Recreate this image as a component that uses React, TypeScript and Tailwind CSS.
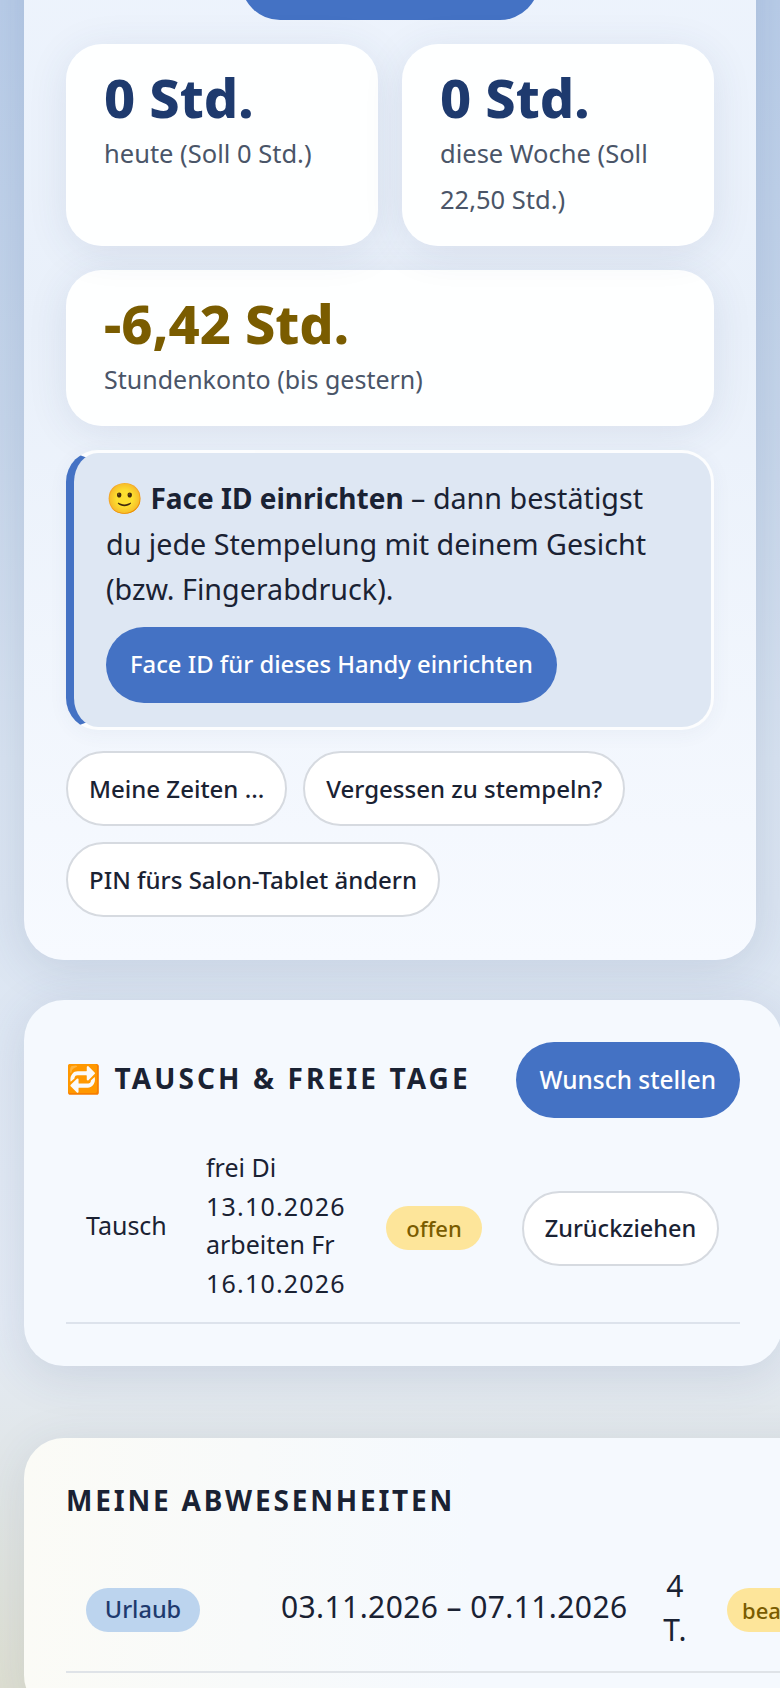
const pill =
  'inline-flex h-[75px] shrink-0 items-center rounded-full border-2 border-[#d6dae0] bg-white px-[21px] text-[24px] font-medium whitespace-nowrap text-[#1a2233]';
const primary =
  'inline-flex items-center rounded-full bg-[#4472c4] whitespace-nowrap text-white font-medium';
const badge = 'inline-flex h-[44px] shrink-0 items-center justify-center rounded-full font-medium';
const title = 'text-[28px] font-bold uppercase whitespace-nowrap text-[#1a2233]';
const statCard =
  'rounded-[36px] bg-white/95 px-[38px] shadow-[0_6px_40px_rgba(50,70,110,0.1)]';

function Stat({ value, label, amber }: { value: string; label: string; amber?: boolean }) {
  return (
    <>
      <div className={`text-[54px] leading-[64px] font-extrabold ${amber ? 'text-[#7a5c00]' : 'text-[#1e3a6e]'}`}>
        {value}
      </div>
      <div className={`mt-[1px] leading-[46px] text-[#4a5568] ${amber ? 'text-[25px]' : 'text-[25.5px]'}`}>{label}</div>
    </>
  );
}

export default function App() {
  return (
    <div className="h-[1688px] w-[780px] overflow-hidden bg-[linear-gradient(180deg,#b9cde9_0%,#c6d6eb_25%,#d8e3f1_45%,#e4ebf5_78%,#e0e5e6_88%,#dedfd2_100%)] font-['Noto_Sans',sans-serif]">
      <div className="-mt-[100px] ml-6 w-[732px]">
        <section className="rounded-[40px] bg-[linear-gradient(180deg,#eef4fd_0%,#e9f0fa_40%,#f7faff_100%)] p-[42px] pb-[43px] shadow-[0_8px_48px_rgba(50,70,110,0.14)]">
          <div className="flex justify-center">
            <div className="h-[78px] w-[298px] rounded-full bg-[#4472c4]" />
          </div>

          <div className="mt-6 grid grid-cols-2 gap-6">
            <div className={`${statCard} h-[202px] pt-[21px]`}>
              <Stat value="0 Std." label="heute (Soll 0 Std.)" />
            </div>
            <div className={`${statCard} h-[202px] pt-[21px]`}>
              <Stat value="0 Std." label="diese Woche (Soll 22,50 Std.)" />
            </div>
          </div>

          <div className={`${statCard} mt-6 h-[156px] pt-[21px]`}>
            <Stat value="-6,42 Std." label="Stundenkonto (bis gestern)" amber />
          </div>

          <div className="mt-6 h-[280px] rounded-[32px] border-[3px] border-l-[8px] border-white/90 border-l-[#4472c4] bg-[#dee7f3] pt-[22px] pr-6 pl-[32px] shadow-[0_4px_20px_rgba(50,70,110,0.05)]">
            <p className="h-[135px] text-[28.7px] leading-[45px] whitespace-nowrap text-[#1a2233]">
              <span className="text-[30px] leading-none">🙂</span>{' '}
              <strong className="text-[28px] font-bold">Face ID einrichten</strong> – dann bestätigst
              <br />
              du jede Stempelung mit deinem Gesicht
              <br />
              (bzw. Fingerabdruck).
            </p>
            <button className={`${primary} mt-[17px] h-[76px] px-6 text-[23.8px]`}>
              Face ID für dieses Handy einrichten
            </button>
          </div>

          <div className="mt-[21px] flex flex-wrap gap-4">
            <button className={pill}>Meine Zeiten ...</button>
            <button className={pill}>Vergessen zu stempeln?</button>
            <button className={pill}>PIN fürs Salon-Tablet ändern</button>
          </div>
        </section>

        <section className="mt-10 w-[758px] rounded-[40px] bg-[#f5f9fe] p-[42px] shadow-[0_8px_48px_rgba(50,70,110,0.14)]">
          <div className="flex items-center justify-between">
            <h2 className={`${title} mb-1 tracking-[3.1px]`}>🔁 Tausch &amp; freie Tage</h2>
            <button className={`${primary} h-[76px] px-6 text-[24.4px]`}>Wunsch stellen</button>
          </div>
          <div className="mt-[10px] flex items-center gap-10 border-b-2 border-[#dde3ec] px-5 py-5 text-[25px] leading-[38.5px] text-[#1a2233]">
            <div className="w-20 shrink-0">Tausch</div>
            <div className="w-[140px] shrink-0 whitespace-nowrap">
              <div>frei Di</div>
              <div className="tracking-[1.2px]">13.10.2026</div>
              <div>arbeiten Fr</div>
              <div className="tracking-[1.2px]">16.10.2026</div>
            </div>
            <span className={`${badge} mt-[6px] w-24 bg-[#fde59a] text-[22px] text-[#7a5c00]`}>offen</span>
            <button className={`${pill} mt-[6px] w-[197px] justify-center !px-0 !text-[23.5px]`}>Zurückziehen</button>
          </div>
        </section>

        <section className="mt-[72px] w-[900px] rounded-[40px] bg-[linear-gradient(90deg,#fbfbf6_0%,#f5f9fe_50%)] p-[42px] shadow-[0_8px_48px_rgba(50,70,110,0.1)]">
          <h2 className={`${title} leading-[40px] tracking-[2.8px]`}>Meine Abwesenheiten</h2>
          <div className="mt-6 flex items-center gap-10 border-b-2 border-[#dfe3e8] px-5 pt-5 pb-[19px] text-[30px] tracking-[0.4px] text-[#1a2233]">
            <span className={`${badge} mt-1 w-[114px] bg-[#bcd4ee] text-[23.5px] tracking-normal text-[#1e3a6e]`}>Urlaub</span>
            <div className="-mt-1 ml-[41px] w-[342px] shrink-0 whitespace-nowrap">03.11.2026 – 07.11.2026</div>
            <div className="w-[24px] shrink-0 text-center leading-[44px]">4 T.</div>
            <span className={`${badge} mt-1 w-[140px] bg-[#fde59a] text-[22px] tracking-normal text-[#7a5c00]`}>bearbeitet</span>
          </div>
        </section>
      </div>
    </div>
  );
}
